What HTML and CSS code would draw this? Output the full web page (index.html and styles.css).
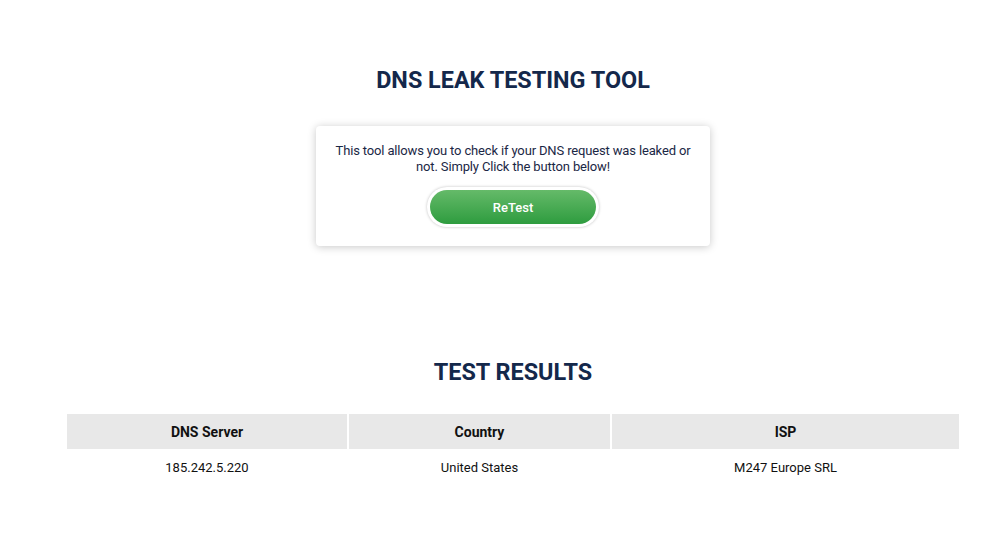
FILE: index.html
```html
<!DOCTYPE html>
<html>
<head>
<meta charset="utf-8">
<link rel="stylesheet" href="styles.css">
</head>
<body>
<main class="page">
  <h1 class="title title-top">DNS LEAK TESTING TOOL</h1>
  <section class="card">
    <p class="card-text">This tool allows you to check if your DNS request was leaked or not. Simply Click the button below!</p>
    <div class="btn-wrap"><button class="btn">ReTest</button></div>
  </section>
  <h2 class="title title-results">TEST RESULTS</h2>
  <div class="table">
    <div class="th">DNS Server</div>
    <div class="th">Country</div>
    <div class="th">ISP</div>
    <div class="td">185.242.5.220</div>
    <div class="td">United States</div>
    <div class="td">M247 Europe SRL</div>
  </div>
</main>
</body>
</html>
```
FILE: styles.css
```css
html, body {
  margin: 0;
  padding: 0;
  background: #ffffff;
}
body {
  font-family: Roboto, "Liberation Sans", sans-serif;
}
.page {
  width: 892px;
  margin-left: 67px;
  display: flex;
  flex-direction: column;
  align-items: center;
}
.title {
  margin: 0;
  font-size: 23.4px;
  line-height: 30px;
  font-weight: 700;
  color: #14284b;
  text-align: center;
}
.title-top {
  margin-top: 65px;
}
.card {
  margin-top: 31px;
  width: 394px;
  box-sizing: border-box;
  padding: 17px 16px 19px;
  background: #fff;
  border-radius: 4px;
  box-shadow: 0 1px 8px rgba(0, 0, 0, 0.22);
  display: flex;
  flex-direction: column;
  align-items: center;
}
.card-text {
  margin: 0;
  font-size: 13px;
  line-height: 16px;
  letter-spacing: -0.15px;
  color: #1b2745;
  text-align: center;
}
.btn-wrap {
  margin-top: 12px;
  padding: 3px;
  border-radius: 24px;
  background: #fff;
  box-shadow: 0 0 3px rgba(0, 0, 0, 0.25);
}
.btn {
  display: block;
  width: 166px;
  height: 34px;
  border: none;
  border-radius: 17px;
  background: linear-gradient(#65ba69, #2e9c3f);
  color: #fff;
  font-family: Roboto, "Liberation Sans", sans-serif;
  font-size: 13px;
  font-weight: 500;
  padding: 0;
}
.title-results {
  margin-top: 111px;
}
.table {
  margin-top: 27px;
  width: 892px;
  display: grid;
  grid-template-columns: 280px 261px 347px;
  column-gap: 2px;
}
.th {
  height: 35px;
  background: #e8e8e8;
  display: flex;
  align-items: center;
  justify-content: center;
  font-size: 14px;
  font-weight: 700;
  color: #111;
}
.td {
  height: 36px;
  display: flex;
  align-items: center;
  justify-content: center;
  font-size: 13px;
  color: #111;
}
```
